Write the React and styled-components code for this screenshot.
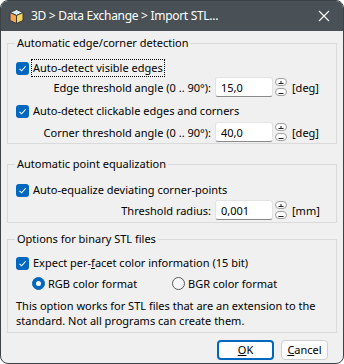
import React from "react";
import styled, { createGlobalStyle } from "styled-components";

const GlobalStyle = createGlobalStyle`
  html, body {
    margin: 0;
    padding: 0;
    background: #ffffff;
  }
  body {
    font-family: "Noto Sans", "Open Sans", sans-serif;
    font-size: 11px;
    color: #000;
  }
  * { box-sizing: border-box; }
`;

const Window = styled.div`
  width: 344px;
  height: 364px;
  border: 1px solid #3c4246;
  border-radius: 8px;
  overflow: hidden;
  background: #f0f0f0;
  display: flex;
  flex-direction: column;
`;

const TitleBar = styled.div`
  height: 30px;
  flex: none;
  background: #495156;
  display: flex;
  align-items: center;
  padding: 0 0 0 7px;
  gap: 6px;
  color: #fff;
`;

const Title = styled.div`
  flex: 1;
  font-size: 12px;
  line-height: 16px;
  letter-spacing: -0.3px;
`;

const CloseButton = styled.div`
  width: 40px;
  height: 30px;
  display: flex;
  align-items: center;
  justify-content: center;
  padding-left: 2px;
`;

const Body = styled.div`
  flex: 1;
  display: flex;
  flex-direction: column;
  padding: 4px 6px 0 6px;
`;

const Group = styled.fieldset`
  margin: ${(p) => p.$mt || 0}px 0 0 0;
  border: 1px solid #dadada;
  padding: ${(p) => p.$pt || 0}px 7px ${(p) => p.$pb || 0}px 8px;
  min-width: 0;
  display: flex;
  flex-direction: column;
`;

const Legend = styled.legend`
  padding: 0 2px;
  margin-left: -1px;
  line-height: 16px;
  height: 16px;
`;

const Row = styled.div`
  display: flex;
  align-items: center;
  height: ${(p) => p.$h || 18}px;
  margin-top: ${(p) => p.$mt || 0}px;
  padding-left: ${(p) => p.$indent || 0}px;
`;

const CheckBox = styled.span`
  width: 13px;
  height: 13px;
  flex: none;
  border-radius: 3px;
  background: #0067c0;
  display: flex;
  align-items: center;
  justify-content: center;
`;

const CheckLabel = styled.span`
  margin-left: 2px;
  padding: 0 1px;
  line-height: 16px;
  border: 1px dotted ${(p) => (p.$focus ? "#000" : "transparent")};
`;

const Radio = styled.span`
  width: 13px;
  height: 13px;
  flex: none;
  border-radius: 50%;
  background: ${(p) => (p.$on ? "#0067c0" : "#f7f7f7")};
  border: 1px solid ${(p) => (p.$on ? "#0067c0" : "#5a5a5a")};
  display: flex;
  align-items: center;
  justify-content: center;

  &::after {
    content: "";
    display: ${(p) => (p.$on ? "block" : "none")};
    width: 5px;
    height: 5px;
    border-radius: 50%;
    background: #fff;
  }
`;

const RadioItem = styled.span`
  display: flex;
  align-items: center;
  gap: 3px;
  width: ${(p) => p.$w || "auto"};
`;

const FieldLabel = styled.span`
  flex: 1;
  text-align: right;
`;

const Input = styled.div`
  width: 58px;
  height: 20px;
  margin-left: 4px;
  flex: none;
  background: #fff;
  border: 1px solid #e3e3e3;
  border-bottom-color: #8a8a8a;
  border-radius: 3px;
  padding-left: 5px;
  display: flex;
  align-items: center;
`;

const Spin = styled.div`
  width: 12px;
  margin-left: 2px;
  flex: none;
  display: flex;
  flex-direction: column;
  gap: 2px;
`;

const SpinPill = styled.div`
  width: 12px;
  height: 8px;
  border: 1px solid #a0a0a0;
  border-radius: 4px;
  background: #fdfdfd;
  display: flex;
  align-items: center;
  justify-content: center;
`;

const Unit = styled.span`
  width: 37px;
  margin-left: 5px;
  flex: none;
`;

const Note = styled.p`
  margin: 6px 0 0 0;
  line-height: 15px;
`;

const Footer = styled.div`
  display: flex;
  justify-content: flex-end;
  gap: 7px;
  padding: 7px 9px 0 0;
`;

const Button = styled.button`
  font: inherit;
  color: #000;
  height: 20px;
  width: ${(p) => p.$w}px;
  background: #fdfdfd;
  border: ${(p) => (p.$primary ? "2px solid #0067c0" : "1px solid #d0d0d0")};
  border-radius: 4px;
  padding: 0;
  line-height: 16px;

  u { text-decoration: underline; }
`;

function CubeIcon() {
  return (
    <svg width="17" height="17" viewBox="0 0 17 17">
      <path d="M8.5 1.5 L15 4.5 L8.5 7.5 L2 4.5 Z" fill="#d6ecf7" stroke="#3a3a3a" strokeWidth="1" strokeLinejoin="round" />
      <path d="M2 4.5 L8.5 7.5 L8.5 15.5 L2 12.5 Z" fill="#f2a553" stroke="#3a3a3a" strokeWidth="1" strokeLinejoin="round" />
      <path d="M15 4.5 L8.5 7.5 L8.5 15.5 L15 12.5 Z" fill="#f7d35a" stroke="#3a3a3a" strokeWidth="1" strokeLinejoin="round" />
    </svg>
  );
}

function CloseIcon() {
  return (
    <svg width="12" height="12" viewBox="0 0 12 12">
      <path d="M1 1 L11 11 M11 1 L1 11" stroke="#fff" strokeWidth="1.1" />
    </svg>
  );
}

function Check() {
  return (
    <svg width="9" height="9" viewBox="0 0 9 9">
      <path d="M1.5 4.8 L3.6 6.8 L7.6 2.3" fill="none" stroke="#fff" strokeWidth="1.1" />
    </svg>
  );
}

function Spinner() {
  return (
    <Spin>
      <SpinPill>
        <svg width="6" height="5" viewBox="0 0 6 5">
          <path d="M0.5 3.5 H5.5 M3 1 V3.5" stroke="#222" strokeWidth="1" />
        </svg>
      </SpinPill>
      <SpinPill>
        <svg width="6" height="5" viewBox="0 0 6 5">
          <path d="M0.5 3.5 H5.5" stroke="#222" strokeWidth="1" />
        </svg>
      </SpinPill>
    </Spin>
  );
}

function CheckRow({ label, focus, mt }) {
  return (
    <Row $mt={mt}>
      <CheckBox>
        <Check />
      </CheckBox>
      <CheckLabel $focus={focus}>{label}</CheckLabel>
    </Row>
  );
}

function ValueRow({ label, value, unit, mt }) {
  return (
    <Row $h={20} $mt={mt}>
      <FieldLabel>{label}</FieldLabel>
      <Input>{value}</Input>
      <Spinner />
      <Unit>{unit}</Unit>
    </Row>
  );
}

export default function App() {
  return (
    <>
      <GlobalStyle />
      <Window>
        <TitleBar>
          <CubeIcon />
          <Title>3D &gt; Data Exchange &gt; Import STL...</Title>
          <CloseButton>
            <CloseIcon />
          </CloseButton>
        </TitleBar>
        <Body>
          <Group $pt={8} $pb={1}>
            <Legend>Automatic edge/corner detection</Legend>
            <CheckRow label="Auto-detect visible edges" focus />
            <ValueRow label="Edge threshold angle (0 .. 90°):" value="15,0" unit="[deg]" />
            <CheckRow label="Auto-detect clickable edges and corners" mt={5} />
            <ValueRow label="Corner threshold angle (0 .. 90°):" value="40,0" unit="[deg]" mt={2} />
          </Group>
          <Group $mt={12} $pt={9} $pb={2}>
            <Legend>Automatic point equalization</Legend>
            <CheckRow label="Auto-equalize deviating corner-points" />
            <ValueRow label="Threshold radius:" value="0,001" unit="[mm]" mt={1} />
          </Group>
          <Group $mt={8} $pt={7} $pb={4}>
            <Legend>Options for binary STL files</Legend>
            <Row>
              <CheckBox>
                <Check />
              </CheckBox>
              <CheckLabel>
                Expect per-<u>f</u>acet color information (15 bit)
              </CheckLabel>
            </Row>
            <Row $mt={2} $indent={16}>
              <RadioItem $w="140px">
                <Radio $on />
                RGB color format
              </RadioItem>
              <RadioItem>
                <Radio />
                BGR color format
              </RadioItem>
            </Row>
            <Note>
              This option works for STL files that are an extension to the
              standard. Not all programs can create them.
            </Note>
          </Group>
          <Footer>
            <Button $primary $w={57}>
              <u>O</u>K
            </Button>
            <Button $w={47}>
              <u>C</u>ancel
            </Button>
          </Footer>
        </Body>
      </Window>
    </>
  );
}
